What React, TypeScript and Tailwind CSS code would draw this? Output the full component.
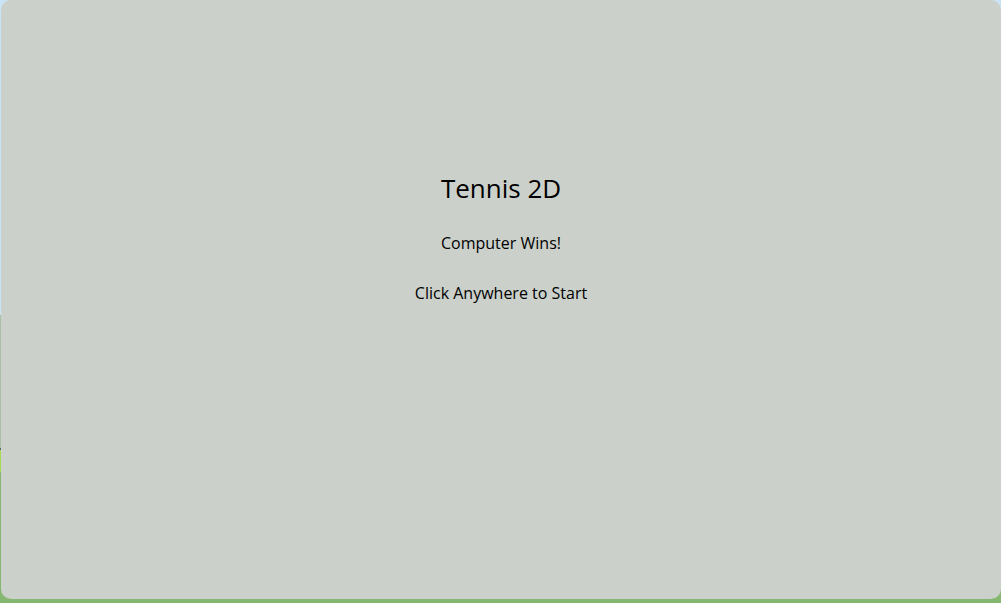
import React from 'react';

export default function App() {
  return (
    <div className="relative w-[1001px] h-[603px] overflow-hidden bg-white">
      {/* game canvas behind the overlay */}
      <div className="absolute inset-0 flex flex-col">
        <div className="h-[315px] bg-[#c9e4f5]" />
        <div className="h-[133px] bg-[#a9bfa8]" />
        <div className="h-[2px] bg-[#5e6b6b]" />
        <div className="h-[22px] bg-[#a6dc52]" />
        <div className="flex-1 bg-[#84b870]" />
      </div>

      {/* menu overlay */}
      <div
        className="absolute left-[1px] top-0 w-[1000px] h-[599px] rounded-[10px] bg-[#cbd0ca] flex flex-col items-center pt-[170px] text-black"
        style={{ fontFamily: '"Open Sans", "Noto Sans", sans-serif' }}
      >
        <h1 className="text-[26px] leading-[36px] font-normal">Tennis 2D</h1>
        <p className="mt-[27px] text-[16px] leading-[20px]">Computer Wins!</p>
        <p className="mt-[30px] text-[16px] leading-[20px]">Click Anywhere to Start</p>
      </div>
    </div>
  );
}
